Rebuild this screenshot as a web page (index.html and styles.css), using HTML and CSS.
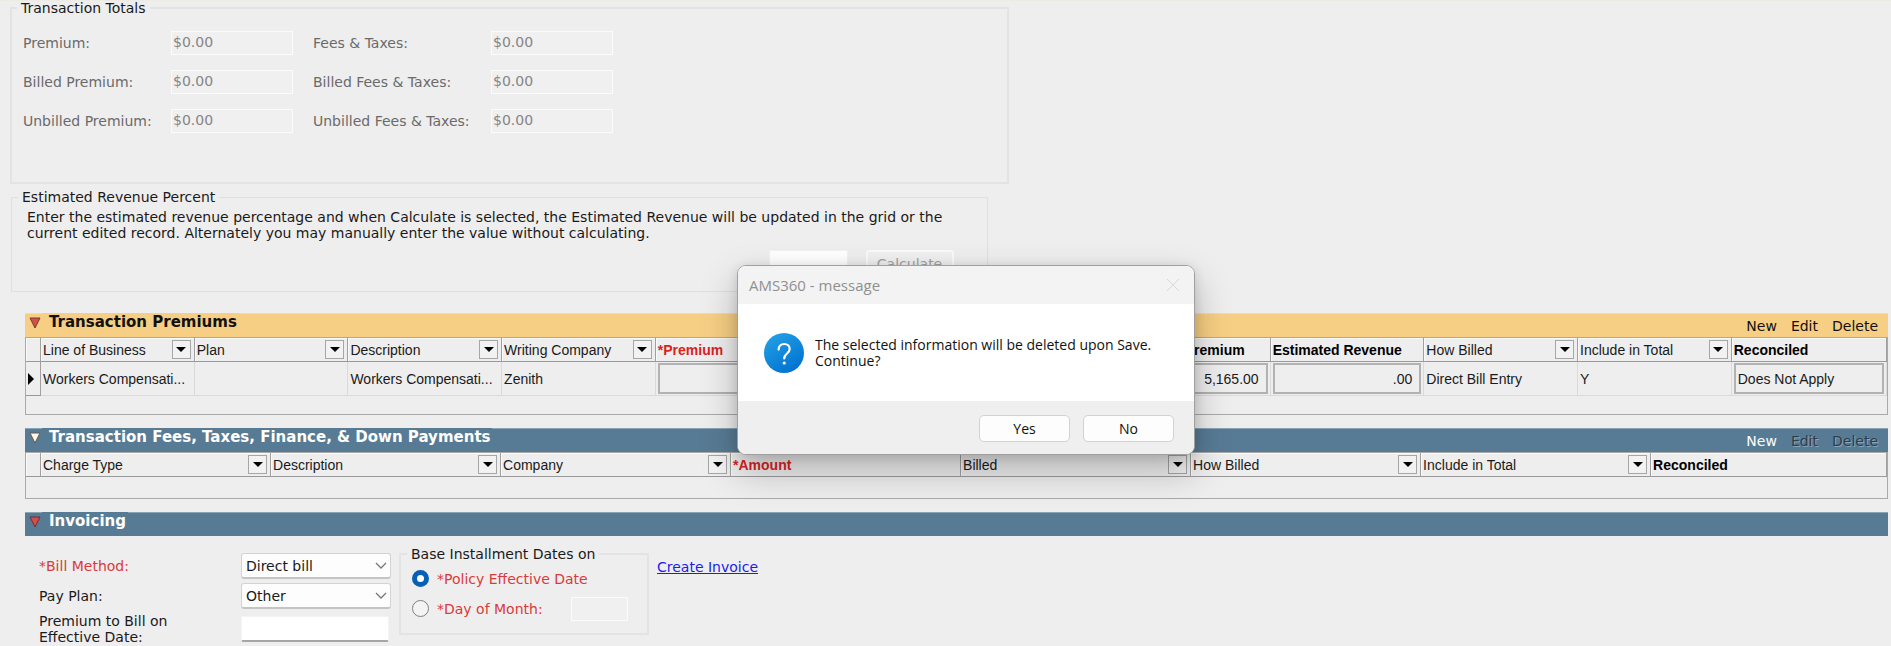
FILE: index.html
```html
<!DOCTYPE html>
<html lang="en">
<head>
<meta charset="utf-8">
<title>AMS360</title>
<link rel="stylesheet" href="styles.css">
</head>
<body>
<main class="page">
  <fieldset class="group totals">
    <legend>Transaction Totals</legend>
    <div class="totals-grid">
      <label for="premium">Premium:</label><input id="premium" class="field" value="$0.00" disabled>
      <label for="fees">Fees &amp; Taxes:</label><input id="fees" class="field" value="$0.00" disabled>
      <label for="billed">Billed Premium:</label><input id="billed" class="field" value="$0.00" disabled>
      <label for="billed-fees">Billed Fees &amp; Taxes:</label><input id="billed-fees" class="field" value="$0.00" disabled>
      <label for="unbilled">Unbilled Premium:</label><input id="unbilled" class="field" value="$0.00" disabled>
      <label for="unbilled-fees">Unbilled Fees &amp; Taxes:</label><input id="unbilled-fees" class="field" value="$0.00" disabled>
    </div>
  </fieldset>

  <fieldset class="group revenue">
    <legend>Estimated Revenue Percent</legend>
    <p class="revenue-text">Enter the estimated revenue percentage and when Calculate is selected, the Estimated Revenue will be updated in the grid or the current edited record. Alternately you may manually enter the value without calculating.</p>
    <div class="revenue-row">
      <input class="percent" aria-label="Estimated revenue percent">
      <button class="calculate" type="button" disabled>Calculate</button>
    </div>
  </fieldset>

  <section class="panel">
    <header class="bar bar-active">
      <svg class="toggle" viewBox="0 0 12 12"><path d="M1 1H11L6 11Z" fill="#d2504c" stroke="#7a3a2c"/></svg>
      <h2>Transaction Premiums</h2>
      <nav class="actions"><button type="button">New</button><button type="button">Edit</button><button type="button">Delete</button></nav>
    </header>
    <div class="grid-frame frame-premiums">
      <table class="grid grid-premiums">
        <thead><tr>
          <th class="marker"></th>
          <th><div class="head">Line of Business<button class="drop" type="button" aria-label="Filter"></button></div></th>
          <th><div class="head">Plan<button class="drop" type="button" aria-label="Filter"></button></div></th>
          <th><div class="head">Description<button class="drop" type="button" aria-label="Filter"></button></div></th>
          <th><div class="head">Writing Company<button class="drop" type="button" aria-label="Filter"></button></div></th>
          <th class="required">*Premium</th>
          <th></th>
          <th></th>
          <th class="strong">Full Term Premium</th>
          <th class="strong">Estimated Revenue</th>
          <th><div class="head">How Billed<button class="drop" type="button" aria-label="Filter"></button></div></th>
          <th><div class="head">Include in Total<button class="drop" type="button" aria-label="Filter"></button></div></th>
          <th class="strong">Reconciled</th>
        </tr></thead>
        <tbody><tr>
          <td class="marker"><svg class="pointer" viewBox="0 0 6 12"><path d="M0 0L6 6L0 12Z"/></svg></td>
          <td>Workers Compensati...</td>
          <td></td>
          <td>Workers Compensati...</td>
          <td>Zenith</td>
          <td class="boxed"><div class="box"></div></td>
          <td class="boxed"><div class="box"></div></td>
          <td class="boxed"><div class="box"></div></td>
          <td class="boxed"><div class="box number">5,165.00</div></td>
          <td class="boxed"><div class="box number">.00</div></td>
          <td>Direct Bill Entry</td>
          <td>Y</td>
          <td class="boxed"><div class="box">Does Not Apply</div></td>
        </tr></tbody>
      </table>
    </div>
  </section>

  <section class="panel">
    <header class="bar">
      <svg class="toggle" viewBox="0 0 12 12"><path d="M1 1H11L6 11Z" fill="#fdf6e6" stroke="#5f5a50"/></svg>
      <h2>Transaction Fees, Taxes, Finance, &amp; Down Payments</h2>
      <nav class="actions"><button type="button">New</button><button type="button" disabled>Edit</button><button type="button" disabled>Delete</button></nav>
    </header>
    <div class="grid-frame frame-fees">
      <table class="grid grid-fees">
        <thead><tr>
          <th class="marker"></th>
          <th><div class="head">Charge Type<button class="drop" type="button" aria-label="Filter"></button></div></th>
          <th><div class="head">Description<button class="drop" type="button" aria-label="Filter"></button></div></th>
          <th><div class="head">Company<button class="drop" type="button" aria-label="Filter"></button></div></th>
          <th class="required">*Amount</th>
          <th><div class="head">Billed<button class="drop" type="button" aria-label="Filter"></button></div></th>
          <th><div class="head">How Billed<button class="drop" type="button" aria-label="Filter"></button></div></th>
          <th><div class="head">Include in Total<button class="drop" type="button" aria-label="Filter"></button></div></th>
          <th class="strong">Reconciled</th>
        </tr></thead>
      </table>
    </div>
  </section>

  <section class="panel">
    <header class="bar">
      <svg class="toggle" viewBox="0 0 12 12"><path d="M1 1H11L6 11Z" fill="#d2504c" stroke="#6b2f33"/></svg>
      <h2>Invoicing</h2>
    </header>
    <div class="invoice">
      <div class="billing">
        <label class="needed" for="method">*Bill Method:</label>
        <div class="select"><select id="method"><option>Direct bill</option></select><svg viewBox="0 0 12 8"><path d="M1 1L6 6L11 1"/></svg></div>
        <label for="plan">Pay Plan:</label>
        <div class="select"><select id="plan"><option>Other</option></select><svg viewBox="0 0 12 8"><path d="M1 1L6 6L11 1"/></svg></div>
        <label for="amount">Premium to Bill on<br>Effective Date:</label>
        <input id="amount" class="amount">
      </div>
      <fieldset class="group dates">
        <legend>Base Installment Dates on</legend>
        <div class="choice"><input type="radio" name="base" id="policy" checked><label for="policy">*Policy Effective Date</label></div>
        <div class="choice"><input type="radio" name="base" id="day"><label for="day">*Day of Month:</label><input class="field day" aria-label="Day of month" disabled></div>
      </fieldset>
      <a class="create" href="#">Create Invoice</a>
    </div>
  </section>
</main>

<div class="dialog" role="dialog" aria-labelledby="dialog-title">
  <header class="dialog-head">
    <span id="dialog-title">AMS360 - message</span>
    <button class="close" type="button" aria-label="Close"><svg viewBox="0 0 12 12"><path d="M0 0L12 12M12 0L0 12"/></svg></button>
  </header>
  <div class="dialog-body">
    <svg class="question" viewBox="0 0 40 40">
      <defs><linearGradient id="blue" x1="0.2" y1="0" x2="0.8" y2="1"><stop offset="0" stop-color="#22a0e4"/><stop offset="1" stop-color="#0070d0"/></linearGradient></defs>
      <circle cx="20" cy="20" r="20" fill="url(#blue)"/>
      <path d="M14.6 16.6C14.6 13.2 17 11 20.2 11C23.4 11 25.7 13 25.7 16C25.7 20.4 20.2 20.6 20.2 25.4" fill="none" stroke="#fff" stroke-width="2.2" stroke-linecap="round"/>
      <circle cx="20.2" cy="30" r="1.6" fill="#fff"/>
    </svg>
    <p>The selected information will be deleted upon Save.<br>Continue?</p>
  </div>
  <footer class="dialog-foot"><button type="button">Yes</button><button type="button">No</button></footer>
</div>
</body>
</html>
```
FILE: styles.css
```css
* { box-sizing: border-box; }
body {
  margin: 0;
  background: #eee;
  color: #1a1a1a;
  font: 14px/16px Verdana, "DejaVu Sans", sans-serif;
}
button, input, select { font: inherit; color: inherit; }
.page { padding: 0 3px 0 10px; box-shadow: inset 0 1px #eeebe4; }

.group { margin: 0; min-width: 0; border: 2px solid #e3e3e3; }
.group legend { padding: 0 4px; }
.totals { width: 53.2%; height: 184px; padding: 15px 11px; }
.totals legend { margin-left: -6px; }
.totals-grid {
  display: grid;
  grid-template-columns: 148px 122px 198px 122px;
  row-gap: 15px;
  align-items: center;
  color: #6a6a6a;
}
.totals-grid label:nth-of-type(even) { padding-left: 20px; }
.field {
  width: 100%;
  height: 24px;
  padding: 0 1px 2px;
  border: 1px solid #fbfbfb;
  background: #f0f0f0;
  color: #858585;
}

.revenue { width: 52%; height: 103px; margin: 5px 0 0 1px; padding: 4px 15px; border-width: 1px; border-color: #dfdfdf; }
.revenue legend { margin-left: -9px; }
.revenue-text { margin: 0; }
.revenue-row { display: flex; justify-content: flex-end; align-items: flex-start; gap: 18px; padding: 9px 18px 0 0; }
.percent { width: 79px; height: 24px; border: 1px solid #f2f2f2; background: #fff; }
.calculate { width: 88px; height: 28px; border: 2px solid #fafafa; border-radius: 4px; background: #f0f0f0; color: #a2a2a2; padding: 0; }

.panel { margin: 13px 0 0 15px; }
.revenue + .panel { margin-top: 21px; }
.bar {
  display: flex;
  height: 24px;
  border-top: 1px solid #8ba4b6;
  background: #587b95;
  color: #fff;
}
.bar-active { background: #f7cf84; border-color: #f5dcae; color: #111; }
.toggle { width: 12px; height: 12px; margin: 3px 1px 0 4px; }
.bar h2 { margin: -1px 0 0; padding: 0 2px 0 7px; background: inherit; font-size: 15px; line-height: 18px; height: 22px; }
.actions { display: flex; gap: 14px; margin-left: auto; padding: 4px 10px 0 0; align-items: flex-start; }
.actions button { border: 0; padding: 0; background: none; line-height: 16px; }
.actions button:disabled { color: #2c3d4b; text-shadow: 1px 1px #8ba5b8; }

.grid-frame { border: 1px solid #a9a9a9; font: 14px/16px "Liberation Sans", Arial, sans-serif; }
.frame-premiums { height: 78px; }
.frame-fees { height: 47px; }
.grid { width: 100%; table-layout: fixed; border-collapse: separate; border-spacing: 0; }
.grid th, .grid td { padding: 0 3px 0 2px; text-align: left; white-space: nowrap; overflow: hidden; }
.grid th { height: 24px; font-weight: normal; border-right: 1px solid #a0a0a0; border-bottom: 1px solid #999; box-shadow: inset 1px 1px #fafafa; }
.grid td { height: 34px; border-right: 1px solid #dadada; border-bottom: 1px solid #dadada; }
.grid-premiums th { width: 8.26%; }
.grid-fees th { width: 12.36%; }
.grid th:last-child { width: auto; }
.grid .marker { width: 15px; padding: 0 2px; border-right-color: #a0a0a0; }
.grid td.marker { border-bottom-color: #999; }
.grid .strong, .grid .required { font-weight: bold; }
.grid .strong { color: #000; }
.grid .required { color: #d9231f; }
.head { display: flex; align-items: center; justify-content: space-between; }
.drop { width: 19px; height: 19px; padding: 0; border: 1px solid #a6a6a6; background: #f2f2f2; display: grid; place-items: center; }
.drop::before { content: ""; border: 5px solid transparent; border-top-color: #000; border-bottom: 0; }
.pointer { display: block; width: 6px; height: 12px; }
.grid td.boxed { padding: 0 2px; }
.box { height: 31px; padding: 0 7px 0 2px; border: 2px solid #b2b2b2; line-height: 28px; }
.number { text-align: right; }

.invoice { display: flex; align-items: flex-start; padding: 10px 0 0 14px; }
.billing { display: grid; grid-template-columns: 202px 150px; row-gap: 4px; align-items: center; padding-top: 7px; }
.needed, .choice { color: #d93a3a; }
.select { position: relative; display: flex; }
.select select { width: 100%; height: 26px; padding: 0 4px; border: 1px solid #d3d3d3; border-bottom: 2px solid #c4c4c4; border-radius: 3px; background: #fdfdfd; appearance: none; }
.select svg { position: absolute; right: 4px; top: 9px; width: 12px; height: 8px; fill: none; stroke: #777; stroke-width: 1.3; pointer-events: none; }
.amount { width: 148px; height: 26px; border: 1px solid #f4f4f4; border-bottom: 2px solid #a6a6a6; border-radius: 2px; background: #fff; }
.dates { width: 250px; height: 89px; margin: 0 8px; padding: 8px 11px; }
.dates legend { margin-left: -5px; }
.choice { display: flex; align-items: center; height: 17px; margin-bottom: 13px; }
.choice [type="radio"] { appearance: none; width: 17px; height: 17px; margin: 0 8px 0 0; border: 1px solid #808080; border-radius: 50%; background: #f4f4f4; }
.choice [type="radio"]:checked { border: 5px solid #0560b8; background: #fff; }
.choice .day { width: 57px; margin-left: auto; margin-right: 8px; }
.create { margin-top: 13px; color: #1c1cf0; }

.dialog {
  position: absolute;
  left: 737px;
  top: 265px;
  width: 458px;
  border: 1px solid #a0a0a0;
  border-radius: 9px;
  background: #fff;
  color: #111;
  overflow: hidden;
  box-shadow: 0 16px 36px rgba(0, 0, 0, .25), 0 2px 12px rgba(0, 0, 0, .12);
  font: 14px/16px "Open Sans", "Segoe UI", sans-serif;
}
.dialog-head { display: flex; align-items: center; justify-content: space-between; height: 38px; padding: 0 15px 0 11px; background: #f3f3f3; color: #909090; font-size: 15px; }
.close { display: flex; padding: 0; border: 0; background: none; }
.close svg { width: 12px; height: 12px; stroke: #d8d8d8; fill: none; }
.dialog-body { display: flex; align-items: center; gap: 11px; height: 97px; padding: 0 26px; }
.question { width: 40px; height: 40px; }
.dialog-body p { margin: 0; }
.dialog-foot { display: flex; justify-content: flex-end; gap: 13px; height: 53px; padding: 14px 20px 0; background: #efefef; }
.dialog-foot button { width: 91px; height: 27px; padding: 0; border: 1px solid #d2d2d2; border-radius: 5px; background: #fdfdfd; }
```
